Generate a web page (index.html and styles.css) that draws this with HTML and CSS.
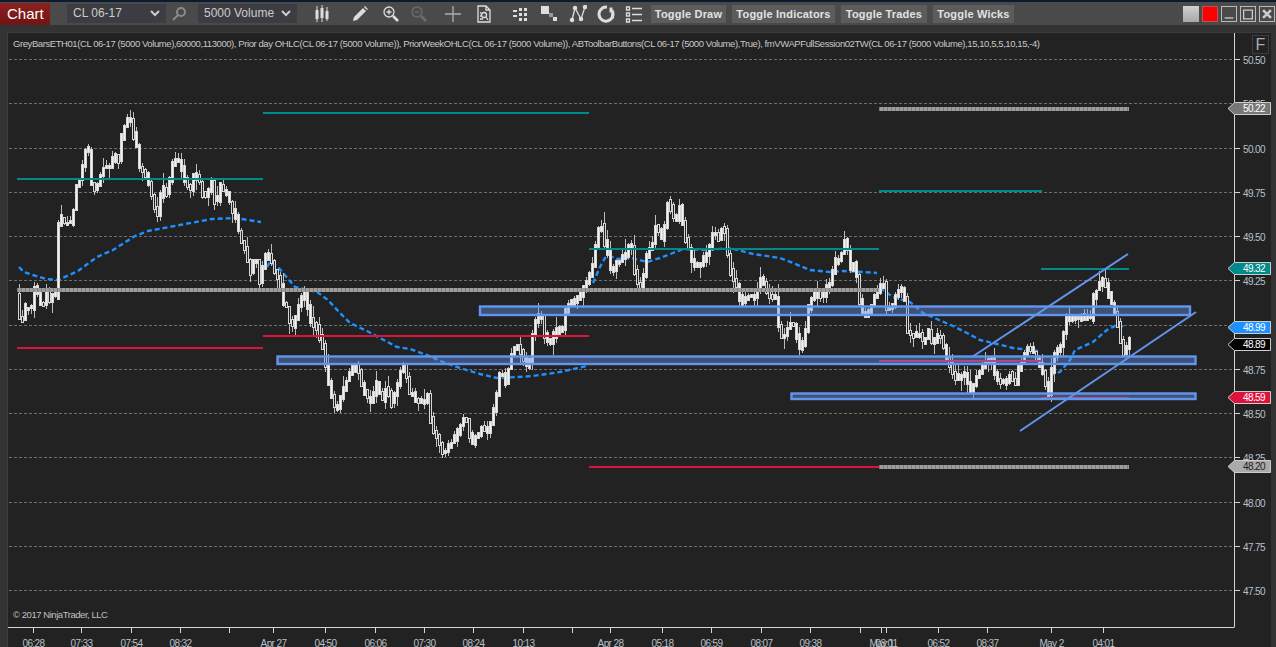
FILE: index.html
```html
<!DOCTYPE html>
<html lang="en">
<head>
  <meta charset="UTF-8" />
  <meta name="viewport" content="width=device-width, initial-scale=1.0" />
  <title>Chart</title>
  <link rel="stylesheet" href="styles.css">
</head>
<body>
  <div class="toolbar">
    <div class="title">Chart</div>
    <div class="select select-instrument"><span>CL 06-17</span>
      <svg class="chevron" viewBox="0 0 10 7"><path d="M1 1l4 4 4-4"/></svg>
    </div>
    <svg class="icon icon-find" viewBox="0 0 16 16"><circle cx="10" cy="6" r="4"/><path d="M7 9l-5 5"/></svg>
    <div class="select select-period"><span>5000 Volume</span>
      <svg class="chevron" viewBox="0 0 10 7"><path d="M1 1l4 4 4-4"/></svg>
    </div>
    <div class="tools">
      <svg class="icon icon-fill" viewBox="0 0 18 18"><path d="M4 1v16M9 0v17M14 2v14" class="thin"/><rect x="2.5" y="5" width="3" height="9"/><rect x="7.5" y="3" width="3" height="10"/><rect x="12.5" y="6" width="3" height="8"/></svg>
      <svg class="icon icon-fill" viewBox="0 0 18 18"><path d="M12 3l3 3-9 9-4 1 1-4zM13 2l1-1 3 3-1 1z"/></svg>
      <svg class="icon" viewBox="0 0 18 18"><circle cx="7" cy="7" r="5"/><path d="M11 11l5 5" class="thick"/><path d="M4.5 7h5M7 4.5v5"/></svg>
      <svg class="icon icon-off" viewBox="0 0 18 18"><circle cx="7" cy="7" r="5"/><path d="M11 11l5 5" class="thick"/><path d="M4.5 7h5"/></svg>
      <svg class="icon icon-cross" viewBox="0 0 18 18"><path d="M1 9h16M9 1v16"/></svg>
      <svg class="icon" viewBox="0 0 18 18"><path d="M3 1h8l4 4v12H3zM11 1v4h4"/><circle cx="9" cy="10" r="2.5"/><path d="M11 12l2 3M5 8h1M5 11h1M5 14h3"/></svg>
      <svg class="icon icon-fill" viewBox="0 0 18 18"><rect x="2" y="5" width="4" height="2"/><rect x="2" y="10" width="4" height="2"/><rect x="8" y="3" width="3" height="3"/><rect x="13" y="3" width="3" height="3"/><rect x="8" y="8" width="3" height="3"/><rect x="13" y="8" width="3" height="3"/><rect x="8" y="13" width="3" height="3"/><rect x="13" y="13" width="3" height="3"/></svg>
      <svg class="icon icon-fill" viewBox="0 0 18 18"><rect x="1" y="1" width="8" height="8"/><rect x="9" y="8" width="4" height="4" class="dim"/><rect x="13" y="12" width="4" height="4"/></svg>
      <svg class="icon icon-nodes" viewBox="0 0 18 18"><path d="M3 15L6 3l6 11 4-12"/><circle cx="3" cy="15" r="1.6"/><circle cx="6" cy="3" r="1.6"/><circle cx="12" cy="14" r="1.6"/><circle cx="16" cy="2" r="1.6"/></svg>
      <svg class="icon icon-ring" viewBox="0 0 18 18"><path d="M10 2.2A7 7 0 1 0 15 5.500M14 2.500v5M15.500 8.500v5"/></svg>
      <svg class="icon" viewBox="0 0 18 18"><path d="M1.500 2h3v3h-3zM1.500 8h3v3h-3zM1.500 14h3v3h-3zM7 3.500h10M7 9.500h10M7 15.500h10"/></svg>
    </div>
    <div class="toggles">
      <button class="toggle">Toggle Draw</button>
      <button class="toggle">Toggle Indicators</button>
      <button class="toggle">Toggle Trades</button>
      <button class="toggle">Toggle Wicks</button>
    </div>
    <div class="window-buttons">
      <div class="win win-gray"></div>
      <div class="win win-red"></div>
      <div class="win win-line"><svg viewBox="0 0 16 16"><path d="M3 12.500h10"/></svg></div>
      <div class="win win-line"><svg viewBox="0 0 16 16"><path d="M3 3.500h10v10H3z"/></svg></div>
      <div class="win win-line"><svg viewBox="0 0 16 16"><path class="x" d="M3.500 3.500l9 9M12.500 3.500l-9 9"/></svg></div>
    </div>
  </div>

  <div class="panel">
    <svg id="chart" class="chart" viewBox="7 33 1264 614"></svg>
    <div class="legend">GreyBarsETH01(CL 06-17 (5000 Volume),60000,113000), Prior day OHLC(CL 06-17 (5000 Volume)), PriorWeekOHLC(CL 06-17 (5000 Volume)), ABToolbarButtons(CL 06-17 (5000 Volume),True), fmVWAPFullSession02TW(CL 06-17 (5000 Volume),15,10,5,5,10,15,-4)</div>
    <div class="copyright">© 2017 NinjaTrader, LLC</div>
    <div class="f-button">F</div>
  </div>
  <script src="chart.js"></script>
</body>
</html>
```

FILE: styles.css
```css
html, body {
  height: 100%;
}
body {
  margin: 0;
  background: #333;
  border-top: 2px solid #0c1a2e;
  box-sizing: border-box;
  font-family: "Liberation Sans", Arial, sans-serif;
  display: flex;
  flex-direction: column;
  overflow: hidden;
}
.toolbar {
  height: 23px;
  flex: none;
  background: #4a4a4a;
  display: flex;
  align-items: center;
}
.title {
  width: 50px;
  height: 22px;
  margin-top: 1px;
  background: linear-gradient(#8e2020, #6f1414);
  color: #fff;
  font-size: 15px;
  line-height: 22px;
  padding-left: 7px;
  box-sizing: border-box;
}
.select {
  height: 19px;
  width: 99px;
  background: #3b3d42;
  color: #ccc;
  font-size: 12px;
  line-height: 19px;
  padding: 0 6px;
  box-sizing: border-box;
  display: flex;
  align-items: center;
  justify-content: space-between;
}
.select-instrument {
  margin-left: 17px;
}
.chevron {
  width: 10px;
  height: 7px;
  fill: none;
  stroke: #ccc;
  stroke-width: 2;
  flex: none;
}
.icon {
  width: 18px;
  height: 18px;
  flex: none;
  fill: none;
  stroke: #ddd;
  stroke-width: 1.3;
}
.icon .thick {
  stroke-width: 2.6;
}
.icon-find {
  width: 16px;
  height: 16px;
  margin: 0 11px 0 5px;
  stroke: #8a8a8a;
  stroke-width: 2;
}
.icon-fill {
  fill: #ddd;
  stroke: none;
}
.icon-fill .thin {
  stroke: #ddd;
  stroke-width: 1;
}
.icon-fill .dim {
  fill: #999;
}
.icon-off {
  stroke: #6d6d6d;
}
.icon-cross {
  stroke: #aab0b6;
}
.icon-nodes circle {
  fill: #ddd;
}
.icon-ring {
  stroke-width: 3;
}
.tools {
  display: flex;
  align-items: center;
  gap: 11px;
  margin-left: 16px;
  width: 338px;
  flex: none;
}
.tools .icon:nth-child(1) { margin-right: 9px; }
.tools .icon:nth-child(2) { margin-right: 2px; }
.tools .icon:nth-child(3) { margin-right: -1px; }
.tools .icon:nth-child(4) { margin-right: 5px; }
.tools .icon:nth-child(5) { margin-right: 2px; }
.tools .icon:nth-child(6) { margin-right: 7px; }
.tools .icon:nth-child(9) { margin-right: -1px; }
.tools .icon:nth-child(10) { margin-right: -1px; }
.toggles {
  display: flex;
  gap: 6px;
}
.toggle {
  height: 18px;
  padding: 0;
  border: 0;
  background: #5c5c5c;
  color: #e2e2e2;
  font-family: "Liberation Sans", Arial, sans-serif;
  font-size: 11px;
  font-weight: bold;
  letter-spacing: 0.2px;
}
.toggle:nth-child(1) { width: 75px; }
.toggle:nth-child(2) { width: 103px; }
.toggle:nth-child(3) { width: 86px; }
.toggle:nth-child(4) { width: 81px; }
.window-buttons {
  margin-left: auto;
  margin-right: 1px;
  display: flex;
  gap: 3px;
}
.win {
  width: 16px;
  height: 16px;
  box-sizing: border-box;
}
.win svg {
  display: block;
  width: 100%;
  height: 100%;
  fill: none;
  stroke: #ccc;
  stroke-width: 1.5;
}
.win svg .x {
  stroke-width: 3;
}
.win-gray {
  background: linear-gradient(#d0d0d0, #a8a8a8);
}
.win-red {
  background: #f00;
  border: 1px solid #b55;
}
.win-line {
  border: 1px solid #bbb;
}
.panel {
  flex: 1;
  margin: 7px 5px 0 7px;
  position: relative;
  background: #222;
  border-top: 1px solid #3c3c3c;
  box-shadow: inset 1px 0 0 #3c3c3c;
  overflow: hidden;
}
.chart {
  display: block;
  width: 100%;
  height: 100%;
}
.legend {
  position: absolute;
  left: 6px;
  top: 5px;
  color: #c8c8c8;
  font-size: 9.5px;
  letter-spacing: -0.42px;
  white-space: nowrap;
}
.copyright {
  position: absolute;
  left: 6px;
  top: 576px;
  color: #c0c0c0;
  font-size: 9.5px;
  letter-spacing: -0.45px;
}
.f-button {
  position: absolute;
  left: 1245px;
  top: 2px;
  width: 17px;
  height: 19px;
  box-sizing: border-box;
  border: 1px solid #3e3e3e;
  color: #aab;
  font-size: 16px;
  line-height: 17px;
  text-align: center;
}
.grid {
  stroke: #6e6e6e;
  stroke-dasharray: 3 2;
}
.axis {
  stroke: #d4d4d4;
  fill: none;
}
.axis-label {
  fill: #b9c0c8;
  font-size: 10px;
  letter-spacing: -0.6px;
}
.wick {
  stroke: #bdbdbd;
  shape-rendering: crispEdges;
}
.candle {
  stroke: #d6d6d6;
  fill: #222;
  shape-rendering: crispEdges;
}
.candle.up {
  fill: #f3f3ec;
}
.vwap {
  fill: none;
  stroke: #1e90ff;
  stroke-width: 2.4;
  stroke-dasharray: 5 3;
}
.level {
  stroke-width: 2;
}
.teal { stroke: #008b8b; }
.red { stroke: #dc143c; }
.gray {
  stroke: #9c9c9c;
  stroke-width: 4;
}
.dither {
  stroke: #7c7c7c;
  stroke-width: 4;
  stroke-dasharray: 1 3;
}
.box {
  fill: rgba(100, 149, 237, 0.42);
  stroke: #6495ed;
  stroke-width: 2.4;
}
.trend {
  stroke: #6495ed;
  stroke-width: 2;
}
.mark {
  stroke: #ccc;
  stroke-width: 1;
}
.mark-text {
  font-size: 10px;
  letter-spacing: -0.6px;
  fill: #fff;
}
.mark-text.dark {
  fill: #222;
}
```

FILE: chart.js
```js
const NS = 'http://www.w3.org/2000/svg';
const svg = document.getElementById('chart');

function add(tag, attrs, text) {
  const el = document.createElementNS(NS, tag);
  for (const k in attrs) el.setAttribute(k, attrs[k]);
  if (text) el.textContent = text;
  svg.appendChild(el);
  return el;
}

function line(x1, y1, x2, y2, cls) {
  return add('line', { x1, y1, x2, y2, class: cls });
}

// price axis: 0.25 is 44.25px
const PRICES = ['50.50', '50.25', '50.00', '49.75', '49.50', '49.25', '49.00', '48.75', '48.50', '48.25', '48.00', '47.75', '47.50'];
PRICES.forEach((p, i) => {
  const y = Math.round(59 + i * 44.25) + 0.5;
  line(9, y, 1234, y, 'grid');
  line(1234, y, 1240, y, 'axis');
  add('text', { x: 1243, y: y + 4, class: 'axis-label' }, p);
});

// closes traced off the session, [x, y]
const TRACE = [
  [18,293],[20,318],[24,320],[27,307],[33,307],[35,288],[38,288],[41,302],[45,303],[48,290],[51,300],[54,296],[57,296],
  [58,235],[62,216],[66,222],[72,222],[75,210],[78,187],[83,172],[87,150],[90,150],[92,178],[94,190],[98,187],[104,168],
  [108,168],[112,167],[115,155],[120,160],[122,140],[127,121],[131,115],[134,132],[138,145],[140,165],[143,170],[147,175],
  [150,182],[155,203],[158,220],[163,187],[168,192],[175,161],[180,159],[183,168],[187,185],[192,188],[195,175],[200,177],
  [204,193],[208,195],[213,180],[217,207],[222,186],[228,193],[233,207],[237,218],[242,238],[247,252],[252,272],[257,255],
  [262,287],[265,258],[270,255],[275,267],[282,285],[283,302],[288,306],[293,328],[298,315],[302,298],[307,293],[311,318],
  [318,327],[325,350],[328,375],[333,395],[338,410],[343,393],[347,383],[353,370],[358,363],[362,382],[367,395],[373,400],
  [378,383],[383,402],[388,387],[393,403],[398,387],[402,370],[406,363],[410,393],[415,393],[418,402],[425,402],[429,397],
  [433,427],[439,440],[445,453],[450,447],[455,440],[462,425],[467,417],[473,443],[479,435],[484,425],[488,432],[493,420],
  [497,402],[502,367],[507,382],[512,358],[515,347],[520,345],[523,353],[530,368],[535,325],[542,311],[547,340],[552,343],
  [557,328],[563,333],[567,310],[571,303],[580,298],[590,278],[595,263],[598,238],[602,220],[605,240],[608,248],[613,272],
  [618,263],[623,258],[628,255],[632,238],[637,280],[642,287],[645,275],[649,250],[655,243],[657,225],[663,238],[667,222],
  [670,193],[673,215],[678,218],[682,203],[685,232],[688,242],[693,258],[698,267],[703,263],[708,253],[712,242],[715,230],
  [720,238],[725,223],[728,248],[732,272],[738,287],[743,305],[748,297],[757,295],[762,278],[767,287],[772,300],[777,297],
  [778,315],[782,335],[787,335],[790,323],[795,325],[802,352],[808,325],[810,307],[813,298],[818,292],[823,298],[828,288],
  [832,280],[836,262],[842,257],[847,238],[852,268],[857,262],[860,298],[865,317],[870,310],[875,300],[880,287],[885,283],
  [888,307],[893,310],[898,293],[905,288],[909,332],[915,337],[919,332],[925,342],[930,332],[935,343],[940,333],[944,342],
  [947,357],[952,367],[957,378],[962,375],[967,375],[972,390],[977,380],[982,370],[987,363],[993,358],[998,380],[1007,383],
  [1010,372],[1017,385],[1020,368],[1027,353],[1030,347],[1035,353],[1043,367],[1050,393],[1055,355],[1063,343],[1067,320],
  [1072,317],[1080,317],[1087,317],[1093,317],[1095,295],[1100,287],[1105,277],[1108,288],[1113,303],[1118,318],[1122,340],
  [1126,355],[1130,340]
];

function closeAt(x) {
  for (let i = 1; i < TRACE.length; i++) {
    if (x <= TRACE[i][0]) {
      const a = TRACE[i - 1], b = TRACE[i];
      return a[1] + (b[1] - a[1]) * (x - a[0]) / (b[0] - a[0]);
    }
  }
  return TRACE[TRACE.length - 1][1];
}

// fixed seed so every load draws the same wicks
let seed = 17;
function rnd() {
  seed = (seed * 16807) % 2147483647;
  return seed / 2147483647;
}

// vwap pieces, one per session
const VWAP = [
  [[19,267],[24,272],[33,275],[46,279],[58,280],[78,271],[97,257],[113,250],[135,236],[148,231],[185,224],[212,219],[235,218],[261,222]],
  [[267,267],[270,262],[278,267],[295,287],[317,292],[328,300],[340,313],[350,323],[367,331],[380,338],[397,347],[410,349],[427,355],[443,362],[460,368],[480,374],[497,378],[517,377],[533,376],[560,372],[587,366]],
  [[593,283],[600,267],[605,258],[610,256],[617,259],[632,258],[647,262],[660,258],[673,253],[683,249],[707,250],[730,248],[753,254],[780,258],[793,263],[810,270],[830,272],[843,271],[863,272],[877,273]],
  [[880,288],[893,297],[910,302],[923,313],[937,319],[953,326],[967,333],[980,340],[997,344],[1013,348],[1038,351]],
  [[1050,375],[1060,372],[1070,360],[1075,350],[1093,342],[1107,330],[1117,325],[1126,327]]
];
VWAP.forEach(pts => add('polyline', { points: pts.join(' '), class: 'vwap' }));

// candles
for (let x = 18; x < 1130; x += 3) {
  const open = closeAt(x);
  const close = closeAt(x + 3);
  const top = Math.round(Math.min(open, close) - rnd() * 4);
  const bottom = Math.max(Math.round(Math.max(open, close) + rnd() * 4), top + 3);
  const hi = top - Math.round(rnd() * rnd() * 13);
  const lo = bottom + Math.round(rnd() * rnd() * 13);
  line(x + 1.5, hi, x + 1.5, lo, 'wick');
  add('rect', {
    x: x + 0.5, y: top + 0.5, width: 2, height: bottom - top,
    class: close <= open || rnd() < 0.4 ? 'candle up' : 'candle'
  });
}

// prior day / prior week levels
const LEVELS = [
  [17, 263, 179, 'teal'], [263, 589, 113, 'teal'], [589, 879, 249, 'teal'], [879, 1042, 191, 'teal'], [1041, 1129, 269, 'teal'],
  [17, 263, 348, 'red'], [263, 589, 336, 'red'], [589, 879, 467, 'red'], [879, 1042, 361, 'red'], [1041, 1129, 398, 'red']
];
LEVELS.forEach(l => line(l[0], l[2], l[1], l[2], 'level ' + l[3]));

const GRAY = [[17, 879, 290], [879, 1129, 109], [879, 1129, 467]];
GRAY.forEach(l => {
  line(l[0], l[2], l[1], l[2], 'gray');
  line(l[0], l[2], l[1], l[2], 'dither');
});

// drawn zones and trend channel
add('rect', { x: 480, y: 306.5, width: 710, height: 8.5, class: 'box' });
add('rect', { x: 277.5, y: 356.5, width: 918, height: 7.5, class: 'box' });
add('rect', { x: 791.5, y: 393.5, width: 404, height: 5.5, class: 'box' });
line(972, 357, 1128, 254, 'trend');
line(1020, 431, 1196, 312, 'trend');

// axis frame
line(1234.5, 33, 1234.5, 627, 'axis');
line(8, 627.5, 1234.5, 627.5, 'axis');

const TICKS = [
  [33, '06:28'], [81, '07:33'], [131, '07:54'], [180, '08:32'], [229, ''], [273, 'Apr 27'], [325, '04:50'], [375, '06:06'],
  [424, '07:30'], [473, '08:24'], [523, '10:13'], [572, ''], [610, 'Apr 28'], [662, '05:18'], [711, '06:59'], [761, '08:07'],
  [810, '09:38'], [860, ''], [881, 'May 1'], [886, '03:01'], [938, '06:52'], [987, '08:37'], [1051, 'May 2'], [1103, '04:01']
];
TICKS.forEach(t => {
  line(t[0] + 0.5, 627, t[0] + 0.5, 633, 'axis');
  if (t[1]) add('text', { x: t[0] + 0.5, y: 647, class: 'axis-label', 'text-anchor': 'middle' }, t[1]);
});

// current value flags on the price axis
const MARKS = [
  [108, '50.22', '#777', ''], [268, '49.32', '#008b8b', ''], [327, '48.99', '#1e90ff', ''],
  [344, '48.89', '#000', ''], [397, '48.59', '#dc143c', ''], [466, '48.20', '#aaa', 'dark']
];
MARKS.forEach(m => {
  const y = m[0] + 0.5;
  add('polygon', {
    points: `1228,${y} 1234.500,${y - 6} 1270.500,${y - 6} 1270.500,${y + 6} 1234.500,${y + 6}`,
    fill: m[2], class: 'mark'
  });
  add('text', { x: 1243, y: y + 3.5, class: 'mark-text ' + m[3] }, m[1]);
});
```
